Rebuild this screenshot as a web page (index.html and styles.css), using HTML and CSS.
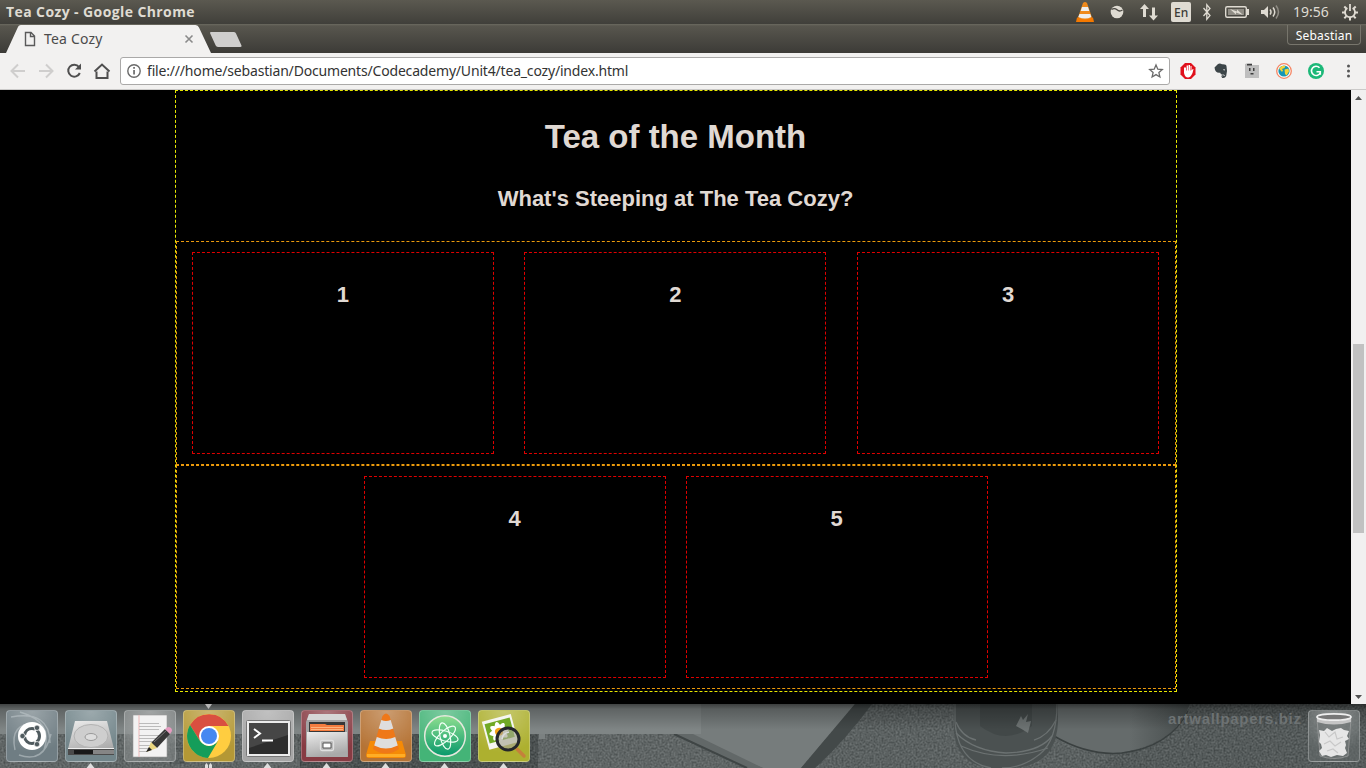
FILE: index.html
```html
<!DOCTYPE html>
<html lang="en">
<head>
<meta charset="utf-8">
<title>Tea Cozy</title>
<link rel="stylesheet" href="styles.css">
</head>
<body>
<div class="screen">
  <header class="panel">
    <span class="panel-title">Tea Cozy - Google Chrome</span>
    <svg class="indicators" width="306" height="24" viewBox="0 0 306 24">
      <path d="M17 17.500h16l1 4.500H16z" fill="#f57900"/><path d="M23 3q2-2 4 0l5 14.500q-7 4-14 0z" fill="#ef8a1c"/><path d="M22 7h6l1.300 4h-8.600zM19.500 14h10.800l1 3q-6 3-13 0z" fill="#eee"/>
      <circle cx="57" cy="12" r="6.300" fill="#dfdbd2"/><path d="M51.500 9.500q3-2 5.500.3t5.500.2" stroke="#4a4842" stroke-width="1.300" fill="none"/>
      <path d="M84.500 4l4.500 5h-3v8h-3V9h-3zM93.500 20.500l-4.500-5h3v-8h3v8h3z" fill="#dfdbd2"/>
      <rect x="111" y="2" width="20" height="20" rx="2" fill="#dfdbd2"/>
      <path d="M143.500 8l6.500 7.500-3.200 3.800V4.700l3.200 3.800-6.500 7.500" stroke="#dfdbd2" stroke-width="1.300" fill="none"/>
      <rect x="165.700" y="6.700" width="20.600" height="10.600" rx="1.500" fill="none" stroke="#dfdbd2" stroke-width="1.400"/><path d="M168 9h16v6h-16z" fill="#8f8c84"/><path d="M187 9h2v6h-2zM170 9l7 2.500v-2l6 5.500-7-2.500v2z" fill="#dfdbd2"/>
      <path d="M201 10h3l4-4v12l-4-4h-3z" fill="#dfdbd2"/><path d="M210 9.500q2 2.500 0 5M213 7.500q3.500 4.500 0 9" stroke="#dfdbd2" stroke-width="1.500" fill="none"/><path d="M216 5.500q5 6.500 0 13" stroke="#8f8c84" stroke-width="1.500" fill="none"/>
      <g stroke="#dfdbd2" fill="none"><path d="M287.400 8a5 5 0 1 0 5.200 0M290 4v7" stroke-width="1.800"/><path d="M282 12.500h3M295 12.500h3M284.300 6.500l2 2M295.700 6.500l-2 2M284.300 18.300l2.200-2.200M295.700 18.300l-2.200-2.200M290 20.500v-3" stroke-width="2"/></g>
    </svg>
    <span class="lang">En</span>
    <span class="clock">19:56</span>
  </header>

  <div class="tabstrip">
    <svg class="tab-shape" width="250" height="29" viewBox="0 0 250 29">
      <path d="M6 29l11.500-25Q18.500 1 21 1H195.500Q198 1 199 3.500L211 29z" fill="#f2f1f0"/>
      <path d="M210.500 8H234q1.500 0 2 1.500l5.500 12Q242 23 240 23H218q-1.700 0-2.300-1.400L210 9z" fill="#cfcecd"/>
      <path d="M25.500 8.500h5.500l3.500 3.500v9.500h-9zM30.500 8.500V12.500h4" fill="none" stroke="#5a5a5a" stroke-width="1.400"/>
      <path d="M185.500 11.500l7 7M192.500 11.500l-7 7" stroke="#8a8a8a" stroke-width="1.600"/>
    </svg>
    <span class="tab-name">Tea Cozy</span>
    <span class="profile">Sebastian</span>
  </div>

  <div class="toolbar">
    <svg class="nav" width="120" height="36" viewBox="0 0 120 36">
      <g fill="none" stroke-width="2">
        <path d="M25 18H12M18 11.500L11.500 18 18 24.500M39 18h13M46 11.500l6.500 6.500-6.500 6.500" stroke="#cfcecd"/>
        <path d="M79 14a6 6 0 1 0 .8 6" stroke="#4f4f4f"/>
        <path d="M96.500 18.500v6.500h11v-6.500" stroke="#4f4f4f"/><path d="M94.500 18.500l7.500-7 7.500 7" stroke="#4f4f4f"/>
      </g>
      <path d="M81 10.500v6h-6z" fill="#4f4f4f"/>
    </svg>
    <div class="address">
      <svg width="26" height="26" viewBox="0 0 26 26"><circle cx="13" cy="13" r="6.200" fill="none" stroke="#6a6a6a" stroke-width="1.400"/><path d="M12.200 9h1.700v1.700h-1.700zM12.200 12h1.700v4.500h-1.700z" fill="#6a6a6a"/></svg>
      <span class="url">file:///home/sebastian/Documents/Codecademy/Unit4/tea_cozy/index.html</span>
      <svg class="star" width="26" height="26" viewBox="0 0 26 26"><path d="M13 7l1.800 4.200 4.500.4-3.400 3 1 4.400-3.900-2.400L9.100 19l1-4.400-3.400-3 4.500-.4z" fill="none" stroke="#6a6a6a" stroke-width="1.300"/></svg>
    </div>
    <svg class="extensions" width="196" height="36" viewBox="0 0 196 36">
      <path d="M15 10h6l4.500 4.500v7L21 26h-6l-4.500-4.500v-7z" fill="#e0101b"/><path d="M14 14.500v5.500q1 4.500 4 4.500 2.500 0 4.500-4.500l1-4q-1-.5-2 1.500V13h-1v4.500h-.5V12h-1.500v5.500h-.5V12.500h-1.400v5h-.6v-3z" fill="#fff"/>
      <path d="M44.500 14.500l3.500-3.500q2-1 4 .3 4.500-.3 4.500 2 1.200 5-.3 9.700-1 2.500-4 2-2-2.500 1-3.500-2.500.5-3-1.800-5 .8-5.700-5.200z" fill="#3c4548"/><path d="M53 17q1.500-2 2 .5z" fill="#ddd"/><path d="M52.500 23q1-1.800 2.200-.5" stroke="#ddd" fill="none"/>
      <path d="M75 11l3-1h4v2h7v13H75z" fill="#bebebe"/><path d="M77 11h5v1.500h-5zM79 15h1.500v3H79zM83 15h1.500v3H83zM80.500 20h3v1.500h-3z" fill="#3d3d3d"/>
      <circle cx="114" cy="18" r="7.300" fill="#fff" stroke="#f58563" stroke-width="1.300"/><circle cx="114" cy="18" r="5.600" fill="#1696b5"/><path d="M109 15.500l3-2.500 3.500-.3-1 2.300-2.500 1 1 1.500-1 1.500zM114.500 16.500l4-1 .5 3-2.500 4-1.500-1.500z" fill="#f3d437"/>
      <circle cx="146" cy="18" r="8" fill="#1cb878"/><path d="M149.500 14.800a4.600 4.600 0 1 0 .9 4.700M146.500 18.800h3.800v3" fill="none" stroke="#fff" stroke-width="1.600"/>
      <g fill="#555"><circle cx="178.500" cy="13" r="1.500"/><circle cx="178.500" cy="18" r="1.500"/><circle cx="178.500" cy="23" r="1.500"/></g>
    </svg>
  </div>

  <div class="viewport">
    <main class="page">
      <section class="tea">
        <h1>Tea of the Month</h1>
        <h2>What's Steeping at The Tea Cozy?</h2>
        <div class="row spread">
          <div class="card"><h3>1</h3></div>
          <div class="card"><h3>2</h3></div>
          <div class="card"><h3>3</h3></div>
        </div>
        <div class="row centered">
          <div class="card"><h3>4</h3></div>
          <div class="card"><h3>5</h3></div>
        </div>
      </section>
    </main>
    <div class="scrollbar">
      <svg width="15" height="614" viewBox="0 0 15 614"><path d="M4 10l3.500-4 3.500 4zM4 605l3.500 4 3.500-4z" fill="#505050"/><rect x="2" y="254" width="11" height="189" fill="#c1c1c1"/></svg>
    </div>
  </div>

  <footer class="desktop">
    <svg class="wallpaper" width="1366" height="64" viewBox="0 0 1366 64">
      <defs>
        <linearGradient id="shade" x2="0" y2="1"><stop stop-color="#000" stop-opacity=".5"/><stop offset=".08" stop-color="#000" stop-opacity=".25"/><stop offset=".4" stop-color="#000" stop-opacity="0"/></linearGradient>
        <linearGradient id="dim"><stop stop-color="#454b4b" stop-opacity="0"/><stop offset="1" stop-color="#454b4b"/></linearGradient>
        <filter id="grain" x="0" y="0" width="100%" height="100%" color-interpolation-filters="sRGB"><feTurbulence type="fractalNoise" baseFrequency=".5" numOctaves="2" seed="4"/><feColorMatrix values=".9 0 0 0 -.12  .9 0 0 0 -.1  .9 0 0 0 -.1  0 0 0 0 .28"/></filter>
      </defs>
      <rect width="1366" height="64" fill="#646a6a"/>
      <rect x="300" y="30" width="238" height="34" fill="#474d4d"/>
      <path d="M290 30l60 34M170 30h16v10h-16zM172 46h14v12h-14z" stroke="#555b5b" stroke-width="4" fill="none"/>
      <path d="M855 0h511v64H800z" fill="#5e6464"/>
      <path d="M1190 0h176v64h-270z" fill="#555b5b"/>
      <rect width="1366" height="64" filter="url(#grain)"/>
      <path d="M675 30h26V0h154l-54 64h-38z" fill="#767c7c"/>
      <path d="M675 30h18l70 34h-16z" fill="#626868"/><path d="M674 30l73 34" stroke="#3f4545" stroke-width="2"/>
      <path d="M855 0h17q-28 38-57 64h-14z" fill="#434949"/>
      <path d="M1058 0h132q-14 42-78 50-34 0-60-18z" fill="#656b6b"/><path d="M1130 0h60q-14 38-60 48z" fill="url(#dim)"/><path d="M1054 32q34 20 68 17 48-6 66-42" stroke="#3a4040" stroke-width="1.500" fill="none"/>
      <path d="M954 0h104v18q-2 46-50 46h-18q-36-4-36-43z" fill="#4b5151"/>
      <path d="M980 0h52v22q-26 20-52 0z" fill="#424848"/>
      <path d="M955 0v18q3 40 36 46M1057 0q0 36-17 50-17 14-38 14" fill="none" stroke="#6a7070" stroke-width="1.300"/>
      <path d="M956 29q18 18 50 20 34-1 46-17M961 42q40 18 87 2M956 18q6 15 20 18M1056 16q-8 16-22 20" fill="none" stroke="#6c7272" stroke-width="1.300"/>
      <path d="M1016 22l5-10 2 4 5-6-2 8 5-1-3 12q-6-4-12-7z" fill="#6d7373"/>
      <rect width="701" height="30" fill="#7f8585"/>
      <rect x="539" y="30" width="6" height="5" fill="#7b8181"/>
      <rect width="1366" height="64" fill="url(#shade)"/>
      <path d="M205 0h7l-3.500 5z" fill="#b5b5b5"/>
      <g fill="#dedede"><path d="M86.500 64l4-5 4 5zM263.500 64l4-5 4 5zM322.500 64l4-5 4 5zM381.500 64l4-5 4 5zM440.500 64l4-5 4 5zM499.500 64l4-5 4 5z"/><path d="M205 64v-3l1.500-2 1.500 2v3zM209 64v-3l1.500-2 1.500 2v3z"/></g>
    </svg>
    <span class="watermark">artwallpapers.biz</span>
    <nav class="launcher">
      <div class="tile dash"><svg viewBox="0 0 52 52"><g fill="none" stroke="#bcc4c8" stroke-width="1.500" opacity=".6"><path d="M5 7Q44 0 44 33M45 24Q38 54 13 45M9 40Q3 12 31 14M14 2Q48 12 38 40"/></g><circle cx="26" cy="26" r="14" fill="#fff"/><circle cx="26" cy="26" r="7.500" fill="none" stroke="#505b5f" stroke-width="3" stroke-dasharray="13.700 2" stroke-dashoffset="6.900"/><g fill="#505b5f" stroke="#fff" stroke-width=".7"><circle cx="16.500" cy="26" r="2.700"/><circle cx="31" cy="17.800" r="2.700"/><circle cx="31" cy="34.200" r="2.700"/></g></svg></div>
      <div class="tile disk"><svg viewBox="0 0 52 52"><defs><linearGradient id="metal" x2=".3" y2="1"><stop stop-color="#ececec"/><stop offset="1" stop-color="#a9a9a9"/></linearGradient></defs><path d="M10 11h32l7 28v6H3v-6z" fill="url(#metal)"/><path d="M3 39h46v6H3z" fill="#4b4b4b"/><path d="M28 40h21v4H28z" fill="#858585"/><path d="M3 38.500h46" stroke="#eee"/><path d="M9 40h19v4H9z" fill="#191919"/><ellipse cx="26" cy="26" rx="17" ry="11.500" fill="#cecece" stroke="#b2b2b2"/><ellipse cx="26" cy="27" rx="6" ry="3.500" fill="#ddd" stroke="#999"/></svg></div>
      <div class="tile editor"><svg viewBox="0 0 52 52"><path d="M9 5h34v42H9z" fill="#f2f2f2" stroke="#999" stroke-width=".6"/><path d="M15 5v42" stroke="#eeb8b8"/><path d="M15 13.500h20M15 16.500h22M15 19.500h20M15 25.500h21M15 28.500h18M15 31.500h17M15 35.500h15M15 38.500h10M15 41.500h9" stroke="#bbb" stroke-width="1"/><path d="M27 33l14-14 5 5-13 14z" fill="#373737"/><path d="M30 32l13-12" stroke="#777"/><path d="M41 19l3-2q4 0 4 4l-2 3z" fill="#e69bc0"/><path d="M27 32l6 6-8 3-2 1z" fill="#ead67e"/><path d="M25 37l3 3-6 2z" fill="#222"/></svg></div>
      <div class="tile chrome"><svg viewBox="0 0 52 52"><circle cx="26" cy="26" r="22" fill="#ffcd40"/><path d="M7 15A22 22 0 0 1 45.500 16H26L17 31z" fill="#d94f40"/><path d="M7 15A22 22 0 0 0 25 48l10-17q-9 10-18 0z" fill="#159d5a"/><circle cx="26" cy="26" r="10" fill="#fff"/><circle cx="26" cy="26" r="8" fill="#4688f1"/></svg></div>
      <div class="tile terminal"><svg viewBox="0 0 52 52"><rect x="4.500" y="10.500" width="44" height="36" rx="1" fill="#ececec" stroke="#777"/><rect x="7" y="13" width="39" height="31" fill="#2d2d2d"/><path d="M7 13h39v12L7 38z" fill="#464646"/><path d="M12 19l6 4.500-6 4.500M20 30.500h11" fill="none" stroke="#fff" stroke-width="2"/></svg></div>
      <div class="tile files"><svg viewBox="0 0 52 52"><path d="M8 4h36l3 8v35H5V12z" fill="#a4a4a4"/><path d="M8 4h36l2 6H6z" fill="#d6d6d6"/><path d="M8 12h36v10H8z" fill="#383838"/><path d="M9 21v-7h15l2 1h17v6z" fill="#f47c3f"/><path d="M10 17.500h32M10 19.500h32" stroke="#ffc18d" stroke-width=".8"/><path d="M6 22h40v25H6z" fill="url(#metal)"/><rect x="19.500" y="30.500" width="13" height="10" rx="1.500" fill="#b5b5b5" stroke="#e0e0e0" stroke-width="1.300"/><path d="M22 33h8v5h-8z" fill="#fff" stroke="#555"/></svg></div>
      <div class="tile vlc"><svg viewBox="0 0 52 52"><path d="M10 31h32l4 14q0 3-3 3H9q-3 0-3-3z" fill="#f58a06"/><path d="M7 44h38v3H7z" fill="#ffad25"/><path d="M22.500 6q3.500-5 7 0l9.500 33q-13 9-26 0z" fill="#ef7818"/><path d="M21.300 10q4.700 2 9.400 0l2.600 8.500q-7 3-14.600 0zM16.800 27q9.500 4 18.400 0l2.600 8.500q-12 6-23.600 0z" fill="#dedede"/></svg></div>
      <div class="tile atom"><svg viewBox="0 0 52 52"><defs><linearGradient id="leaf" x2="0" y2="1"><stop stop-color="#8fdf90"/><stop offset="1" stop-color="#07986b"/></linearGradient></defs><circle cx="26" cy="26" r="20.300" fill="url(#leaf)" stroke="#e5e8dd" stroke-width="1.500"/><g fill="none" stroke="#effff4" stroke-width="1.200"><ellipse cx="26" cy="26" rx="13.500" ry="5" transform="rotate(17 26 26)"/><ellipse cx="26" cy="26" rx="13.500" ry="5" transform="rotate(77 26 26)"/><ellipse cx="26" cy="26" rx="13.500" ry="5" transform="rotate(137 26 26)"/></g><circle cx="26" cy="26" r="2" fill="#fff"/></svg></div>
      <div class="tile viewer"><svg viewBox="0 0 52 52"><g transform="rotate(-15 20 22)"><path d="M7 8h30v29H7z" fill="#f5f5f0"/><path d="M9 11h26v20H9z" fill="#71a925"/><g fill="#fff"><ellipse cx="21" cy="22" rx="3.500" ry="10"/><ellipse cx="21" cy="22" rx="10" ry="3.500"/><ellipse cx="21" cy="22" rx="3.500" ry="10" transform="rotate(45 21 22)"/><ellipse cx="21" cy="22" rx="3.500" ry="10" transform="rotate(-45 21 22)"/></g><circle cx="21" cy="22" r="4" fill="#f4a31b"/></g><path d="M39 39l7 7" stroke="#c5803b" stroke-width="3.500" stroke-linecap="round"/><circle cx="30" cy="29" r="11" fill="#a4a590" fill-opacity=".65" stroke="#24262b" stroke-width="3"/><path d="M24 29q1-6 7-7" stroke="#ddd" stroke-width="1.500" fill="none"/></svg></div>
      <div class="tile trash"><svg viewBox="0 0 52 52"><path d="M9 9l3 37q14 5 28 0l3-37z" fill="#747979" fill-opacity=".5" stroke="#a8a8a8" stroke-width=".6"/><path d="M9 7q17 8 34 0v5q-17 5-34 0z" fill="#c5c5c5"/><ellipse cx="26" cy="7" rx="17" ry="3.200" fill="#777" stroke="#eee" stroke-width="1.700"/><path d="M12 25l-1-5 5 1 3-3 5 3 4-2 5-1 3 2 5 1-2 5 2 3-4 2 1 4-1 3 2 5-4 3-6-1-6 2-5-2-4 1-3-5 3-3-1-4-2-2z" fill="#e6e6e6"/><path d="M17 22l4 5 6-5 2 7 6-2M16 34l6-3 5 5 6-4M19 41l6-2 5 4" fill="none" stroke="#c8c8c8" stroke-width="1.200"/></svg></div>
    </nav>
  </footer>
</div>
</body>
</html>
```

FILE: styles.css
```css
* { box-sizing: border-box; }
body { margin: 0; font-family: "Noto Sans", sans-serif; overflow: hidden; background: #000; }
svg { display: block; }
.screen { width: 1366px; height: 768px; display: flex; flex-direction: column; }

.panel { position: relative; height: 24px; background: linear-gradient(#5b5950, #403f3a); display: flex; justify-content: space-between; }
.panel-title { margin-left: 6px; font-family: "Open Sans", sans-serif; font-size: 14px; font-weight: 700; line-height: 23px; color: #dfdbd2; letter-spacing: 0.4px; }
.lang { position: absolute; left: 1174px; top: 0; font-size: 12px; line-height: 25px; color: #3c3b37; font-weight: 500; }
.clock { position: absolute; left: 1293px; top: 0; font-size: 14px; line-height: 23px; color: #dfdbd2; }

.tabstrip { position: relative; height: 29px; background: linear-gradient(#6b6a60 0, #58564e 2px, #3c3b37); display: flex; justify-content: space-between; }
.tab-name { position: absolute; left: 44px; top: 5px; font-size: 14px; line-height: 20px; color: #4b4b4b; letter-spacing: 0.2px; }
.profile { width: 74px; height: 20px; margin: 1px 5px 0 0; border: 1px solid #77756c; border-top: 0; border-radius: 0 0 4px 4px; text-align: center; font-size: 12px; line-height: 21px; color: #fff; letter-spacing: 0.2px; }

.toolbar { height: 37px; background: #f2f1f0; border-bottom: 1px solid #cbcac9; display: flex; }
.address { width: 1050px; height: 28px; margin-top: 4px; border: 1px solid #aaa9a8; border-radius: 3px; background: #fff; display: flex; }
.url { font-size: 14px; line-height: 26px; color: #333; white-space: nowrap; letter-spacing: -0.18px; }
.star { margin-left: auto; }

.viewport { height: 614px; display: flex; background: #000; }
.page { width: 1351px; font-family: "Liberation Sans", Arial, sans-serif; font-size: 22px; color: #e0d9d3; }
.tea { width: 1002px; height: 602px; margin: 0 auto; border: 1px dashed #e8e800; text-align: center; }
.tea h1 { margin: 27px 0 0; font-size: 33px; line-height: 38px; }
.tea h2 { margin: 30px 0 0; font-size: 22px; line-height: 26px; }
.tea h3 { margin: 29px 0 0; font-size: 22px; line-height: 26px; }
.row { height: 224px; border: 1px dashed #eb9a0c; display: flex; }
.tea h2 + .row { margin-top: 29px; }
.spread { justify-content: space-around; }
.centered { justify-content: center; }
.card { width: 302px; height: 202px; margin: 10px; border: 1px dashed #e00000; }
.scrollbar { width: 15px; background: #f1f0f0; }

.desktop { position: relative; height: 64px; overflow: hidden; }
.wallpaper { position: absolute; left: 0; top: 0; }
.watermark { position: absolute; left: 1168px; top: 6px; font: 700 15px/18px "Liberation Sans", Arial, sans-serif; letter-spacing: 0.7px; color: #6d7273; }
.launcher { position: relative; display: flex; gap: 7px; padding: 6px; }
.tile { width: 52px; height: 52px; border-radius: 4px; border: 1px solid rgba(255,255,255,.25); background: radial-gradient(circle at 50% 0, rgba(255,255,255,.3), rgba(255,255,255,0) 75%), var(--tint); }
.tile svg { width: 52px; height: 52px; margin: -1px; }
.dash { --tint: #6f7d83; }
.disk { --tint: #72858a; }
.editor { --tint: rgba(135,140,140,.6); }
.chrome { --tint: #b49835; }
.terminal { --tint: #a6a6a6; }
.files { --tint: #873b43; }
.vlc { --tint: #b57335; }
.atom { --tint: #44b477; }
.viewer { --tint: #adb02f; }
.trash { --tint: rgba(100,106,106,.65); margin-left: auto; }
```
